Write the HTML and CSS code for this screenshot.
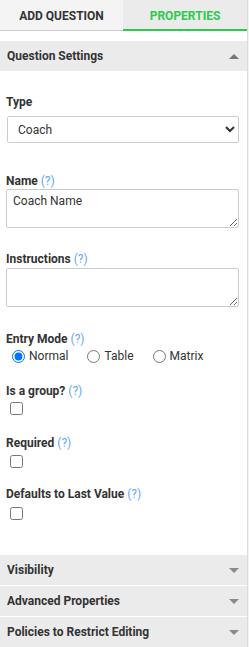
FILE: index.html
```html
<!DOCTYPE html>
<html lang="en">
<head>
    <meta charset="UTF-8">
    <meta name="viewport" content="width=device-width, initial-scale=1.0">
    <title>Question Properties</title>
    <link rel="stylesheet" href="styles.css">
</head>
<body>
    <div class="panel">
        <div class="tabs">
            <div class="tab">ADD QUESTION</div>
            <div class="tab active">PROPERTIES</div>
        </div>

        <div class="section-header open">
            <span>Question Settings</span>
            <span class="caret up"></span>
        </div>

        <div class="settings">
            <div class="field field-type">
                <label class="field-label">Type</label>
                <select class="select">
                    <option>Coach</option>
                </select>
            </div>

            <div class="field field-name">
                <label class="field-label">Name <span class="help">(?)</span></label>
                <textarea class="textarea">Coach Name</textarea>
            </div>

            <div class="field field-instructions">
                <label class="field-label">Instructions <span class="help">(?)</span></label>
                <textarea class="textarea"></textarea>
            </div>

            <div class="field field-entry">
                <label class="field-label">Entry Mode <span class="help">(?)</span></label>
                <div class="radio-row">
                    <label class="radio"><input type="radio" name="mode" checked> Normal</label>
                    <label class="radio"><input type="radio" name="mode"> Table</label>
                    <label class="radio"><input type="radio" name="mode"> Matrix</label>
                </div>
            </div>

            <div class="field field-group">
                <label class="field-label">Is a group? <span class="help">(?)</span></label>
                <input type="checkbox" class="check">
            </div>

            <div class="field field-required">
                <label class="field-label">Required <span class="help">(?)</span></label>
                <input type="checkbox" class="check">
            </div>

            <div class="field field-defaults">
                <label class="field-label">Defaults to Last Value <span class="help">(?)</span></label>
                <input type="checkbox" class="check">
            </div>
        </div>

        <div class="section-header">
            <span>Visibility</span>
            <span class="caret down"></span>
        </div>
        <div class="section-header">
            <span>Advanced Properties</span>
            <span class="caret down"></span>
        </div>
        <div class="section-header">
            <span>Policies to Restrict Editing</span>
            <span class="caret down"></span>
        </div>
    </div>
</body>
</html>
```

FILE: styles.css
```css
body {
    margin: 0;
    background-color: #f3f3f3;
    font-family: Roboto, 'Liberation Sans', sans-serif;
    font-size: 12px;
    color: #333;
}
.panel {
    width: 247px;
    height: 647px;
    background-color: white;
    border-right: 1px solid #dcdcdc;
}
.tabs {
    display: flex;
    height: 31px;
}
.tab {
    width: 123px;
    box-sizing: border-box;
    padding-top: 9px;
    text-align: center;
    font-weight: bold;
    background-color: #f4f4f4;
    border-bottom: 1px solid #cfcfcf;
}
.tab.active {
    flex: 1;
    color: #2bcc4a;
    background-color: #ebebeb;
    border-bottom: 2px solid #2bcc4a;
}
.section-header {
    display: flex;
    justify-content: space-between;
    align-items: center;
    height: 30px;
    padding: 0 8px 0 7px;
    margin-top: 1px;
    background-color: #ebebeb;
    font-weight: bold;
}
.section-header.open {
    margin-top: 10px;
}
.caret {
    width: 0;
    height: 0;
    border-left: 5px solid transparent;
    border-right: 5px solid transparent;
}
.caret.up {
    border-bottom: 5px solid #777;
}
.caret.down {
    border-top: 5px solid #8a8a8a;
}
.settings {
    padding: 0 8px 34px 6px;
}
.field-label {
    display: block;
    line-height: 14px;
    font-weight: bold;
}
.help {
    font-weight: normal;
    color: #66a6f7;
}
.select {
    display: block;
    width: 232px;
    height: 27px;
    margin-left: 1px;
    padding: 0 6px;
    font-family: Roboto, 'Liberation Sans', sans-serif;
    font-size: 12px;
    color: #333;
    background-color: white;
    border: 1px solid #cccccc;
    border-radius: 2px;
}
.textarea {
    display: block;
    box-sizing: border-box;
    width: 233px;
    height: 39px;
    padding: 4px 6px;
    font-family: Roboto, 'Liberation Sans', sans-serif;
    font-size: 12px;
    color: #333;
    border: 1px solid #cccccc;
    border-radius: 2px;
}
.field-type { margin-top: 24px; }
.field-type .field-label { margin-bottom: 7px; }
.field-name { margin-top: 31px; }
.field-name .field-label { margin-bottom: 1px; }
.field-instructions { margin-top: 24px; }
.field-instructions .field-label { margin-bottom: 2px; }
.field-entry { margin-top: 25px; }
.field-entry .field-label { margin-bottom: 2px; }
.radio-row {
    display: flex;
    align-items: center;
    height: 16px;
    padding-left: 6px;
}
.radio {
    display: inline-flex;
    align-items: center;
    margin-right: 19px;
}
.radio input {
    margin: 0 4px 0 0;
}
.check {
    display: block;
    margin: 4px 0 0 4px;
}
.field-group { margin-top: 20px; }
.field-required { margin-top: 21px; }
.field-required .check { margin-top: 5px; }
.field-defaults { margin-top: 19px; }
.field-defaults .check { margin-top: 6px; }
```
